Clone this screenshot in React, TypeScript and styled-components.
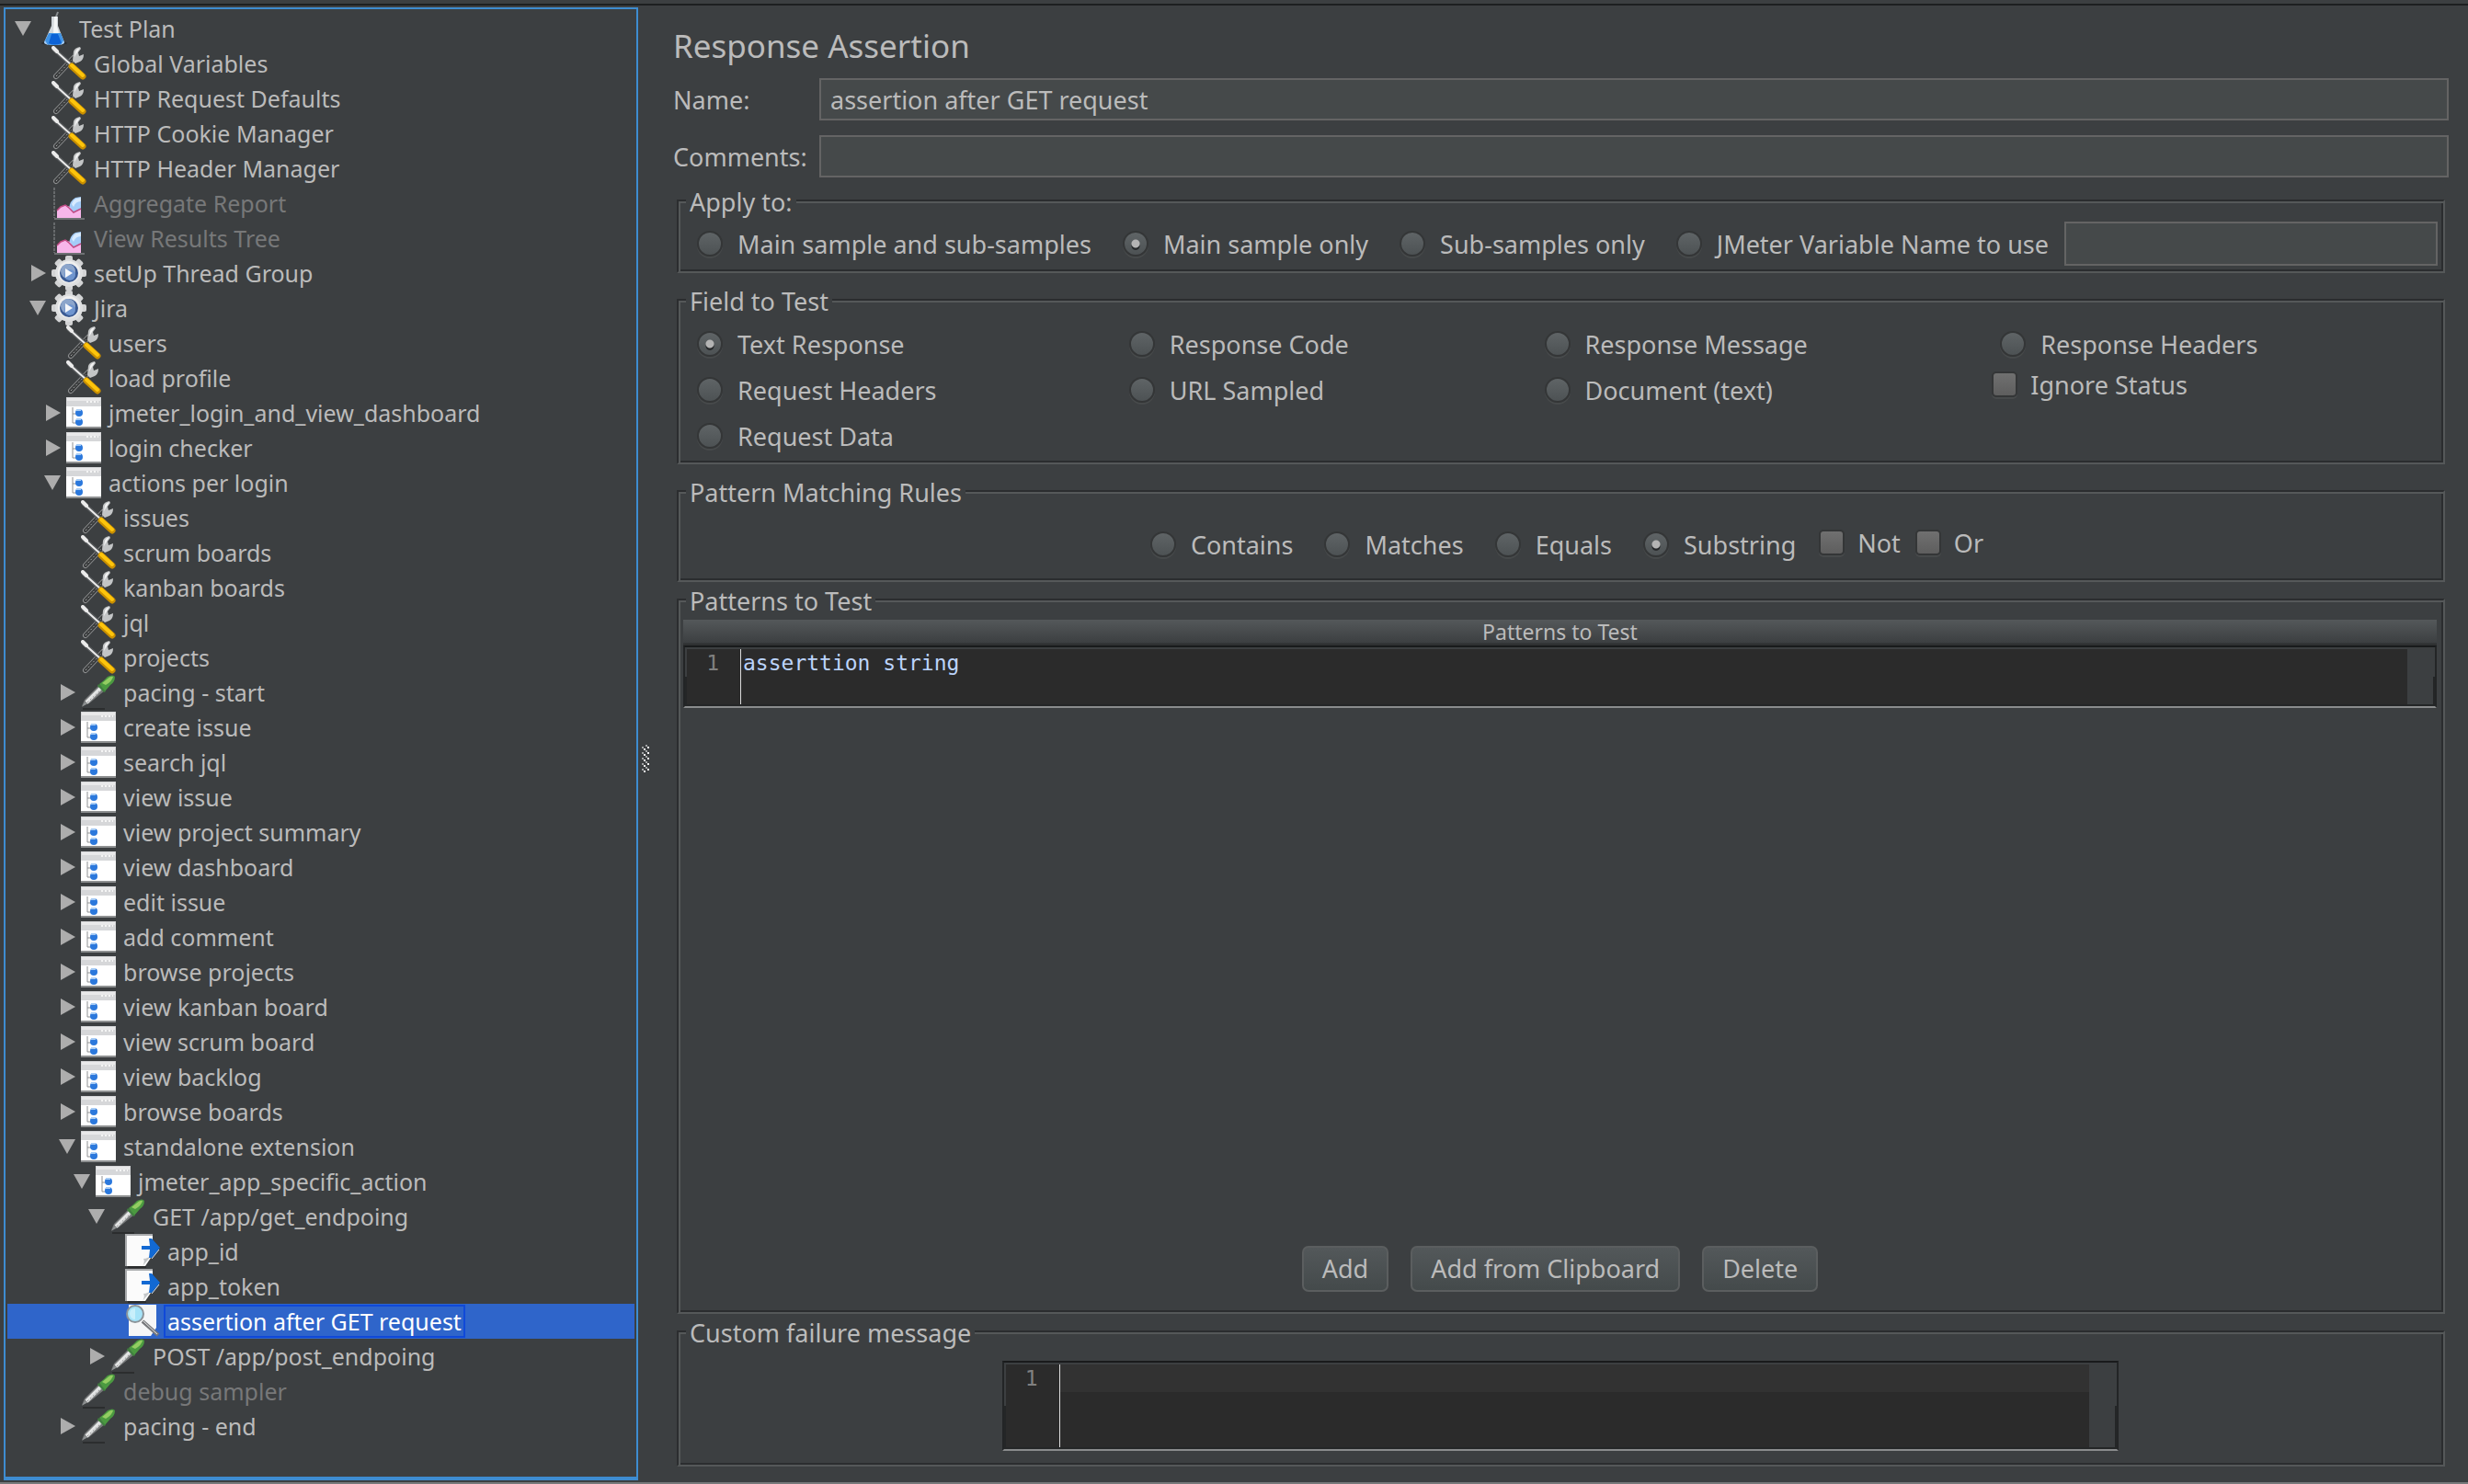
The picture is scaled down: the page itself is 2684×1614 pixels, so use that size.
import React, { useState } from "react";
import styled, { createGlobalStyle, css } from "styled-components";

const color = {
  panel: "#3c3f41",
  text: "#bbbbbb",
  muted: "#777879",
  field: "#45494a",
  fieldBorder: "#646464",
  etchDark: "#2b2d2f",
  etchLight: "#555859",
  focus: "#3e8cd0",
  selection: "#2f65ca",
  editor: "#2b2b2b",
  editorLine: "#323232",
};

const GlobalStyle = createGlobalStyle`
  *, *::before, *::after { box-sizing: border-box; }
  body {
    margin: 0;
    background: ${color.panel};
    color: ${color.text};
    font-family: "Noto Sans", "Open Sans", sans-serif;
    font-size: 27px;
  }
  button, input, textarea { font: inherit; color: inherit; }
`;

const Window = styled.div`
  display: flex;
  flex-direction: column;
  min-height: 100vh;
  border-bottom: 2px solid #77797a;
`;

const TopEdge = styled.div`
  flex: none;
  height: 6px;
  border-bottom: 2px solid #1d1f20;
`;

const Body = styled.div`
  display: flex;
  flex: 1;
`;

/* ---------- Tree ---------- */

const TreePane = styled.nav`
  flex: 0 0 690px;
  margin: 2px 0 2px 4px;
  padding: 2px;
  border: 2px solid ${color.focus};
  border-bottom-width: 4px;
`;

const TreeList = styled.ul`
  list-style: none;
  margin: 0;
  padding: 0;
`;

const TreeRow = styled.li<{ $depth: number; $selected?: boolean }>`
  display: flex;
  align-items: center;
  height: 38px;
  padding-left: ${(p) => 8 + p.$depth * 16}px;
  background: ${(p) => (p.$selected ? color.selection : "transparent")};
`;

const Toggle = styled.button`
  display: flex;
  align-items: center;
  justify-content: center;
  width: 18px;
  height: 38px;
  margin: 0 6px 0 0;
  padding: 0;
  border: 0;
  background: none;
`;

const ToggleGap = styled.span`
  width: 18px;
  margin-right: 6px;
`;

const TreeIcon = styled.svg`
  flex: none;
  width: 38px;
  height: 38px;
  margin-right: 4px;
`;

const TreeLabel = styled.span<{ $selected?: boolean; $muted?: boolean }>`
  padding: 0 2px;
  border: 2px solid ${(p) => (p.$selected ? "#1049d8" : "transparent")};
  font-size: 25px;
  line-height: 32px;
  white-space: nowrap;
  color: ${(p) => (p.$selected ? "#ffffff" : p.$muted ? color.muted : color.text)};
`;

type IconKind = "flask" | "tools" | "chart" | "gear" | "page" | "pipette" | "extract" | "assert";
type Node = { label: string; depth: number; icon: IconKind; open?: boolean; muted?: boolean; selected?: boolean };

const nodes: Node[] = [
  { label: "Test Plan", depth: 0, icon: "flask", open: true },
  { label: "Global Variables", depth: 1, icon: "tools" },
  { label: "HTTP Request Defaults", depth: 1, icon: "tools" },
  { label: "HTTP Cookie Manager", depth: 1, icon: "tools" },
  { label: "HTTP Header Manager", depth: 1, icon: "tools" },
  { label: "Aggregate Report", depth: 1, icon: "chart", muted: true },
  { label: "View Results Tree", depth: 1, icon: "chart", muted: true },
  { label: "setUp Thread Group", depth: 1, icon: "gear", open: false },
  { label: "Jira", depth: 1, icon: "gear", open: true },
  { label: "users", depth: 2, icon: "tools" },
  { label: "load profile", depth: 2, icon: "tools" },
  { label: "jmeter_login_and_view_dashboard", depth: 2, icon: "page", open: false },
  { label: "login checker", depth: 2, icon: "page", open: false },
  { label: "actions per login", depth: 2, icon: "page", open: true },
  { label: "issues", depth: 3, icon: "tools" },
  { label: "scrum boards", depth: 3, icon: "tools" },
  { label: "kanban boards", depth: 3, icon: "tools" },
  { label: "jql", depth: 3, icon: "tools" },
  { label: "projects", depth: 3, icon: "tools" },
  { label: "pacing - start", depth: 3, icon: "pipette", open: false },
  { label: "create issue", depth: 3, icon: "page", open: false },
  { label: "search jql", depth: 3, icon: "page", open: false },
  { label: "view issue", depth: 3, icon: "page", open: false },
  { label: "view project summary", depth: 3, icon: "page", open: false },
  { label: "view dashboard", depth: 3, icon: "page", open: false },
  { label: "edit issue", depth: 3, icon: "page", open: false },
  { label: "add comment", depth: 3, icon: "page", open: false },
  { label: "browse projects", depth: 3, icon: "page", open: false },
  { label: "view kanban board", depth: 3, icon: "page", open: false },
  { label: "view scrum board", depth: 3, icon: "page", open: false },
  { label: "view backlog", depth: 3, icon: "page", open: false },
  { label: "browse boards", depth: 3, icon: "page", open: false },
  { label: "standalone extension", depth: 3, icon: "page", open: true },
  { label: "jmeter_app_specific_action", depth: 4, icon: "page", open: true },
  { label: "GET /app/get_endpoing", depth: 5, icon: "pipette", open: true },
  { label: "app_id", depth: 6, icon: "extract" },
  { label: "app_token", depth: 6, icon: "extract" },
  { label: "assertion after GET request", depth: 6, icon: "assert", selected: true },
  { label: "POST /app/post_endpoing", depth: 5, icon: "pipette", open: false },
  { label: "debug sampler", depth: 3, icon: "pipette", muted: true },
  { label: "pacing - end", depth: 3, icon: "pipette", open: false },
];

const teeth = [0, 45, 90, 135, 180, 225, 270, 315];

const drawings: Record<IconKind, React.ReactNode> = {
  flask: (
    <>
      <ellipse cx="19" cy="35" rx="14" ry="2" fill="#2a2d30" />
      <path d="M21 6 23 1" stroke="#8b8f92" strokeWidth="2" />
      <path d="M16 6h7v10l7 18q-1 3-11 3T8 34l8-18z" fill="#d3d8dc" />
      <path d="M19 6h3v11l2 7h-6z" fill="#f4f6f7" />
      <path d="M13 24h13l4 10q-1 3-11 3T8 34z" fill="#3f93e6" />
      <path d="M16 25h7l4 10q-8 3-14 0z" fill="#0c62d6" />
      <path d="M9 32l-1 3 4 2z M29 32l1 3-4 2z" fill="#a9cdf3" />
    </>
  ),
  tools: (
    <>
      <path d="M5 33 24 13" stroke="#8d8f90" strokeWidth="6" strokeLinecap="round" />
      <path d="M5 33 24 13" stroke="#393b3c" strokeWidth="4" strokeLinecap="round" />
      <path d="M5 33 22 15" stroke="#a5a7a8" strokeWidth="1" strokeDasharray="2 2" />
      <path d="M23 16 24 6q1-4 7-5l1 2-3 4 1 4 5-2q0 6-4 8l-5 2z" fill="#c3c5c6" />
      <path d="M25 12 26 6q1-3 5-4l-3 5z" fill="#f3f3f3" />
      <path d="M2 3 22 21" stroke="#55585a" strokeWidth="5" />
      <path d="M2 3 22 21" stroke="#ebebeb" strokeWidth="2" strokeLinecap="round" />
      <path d="M2 2 6 6" stroke="#ebebeb" strokeWidth="4" strokeLinecap="round" />
      <path d="M22 22 34 33" stroke="#c98f00" strokeWidth="7" strokeLinecap="round" />
      <path d="M22 21 34 32" stroke="#fdc50c" strokeWidth="4" strokeLinecap="round" />
    </>
  ),
  chart: (
    <>
      <path d="M3 2v33" stroke="#66696b" strokeWidth="2" strokeDasharray="3 1" />
      <path d="M3 36h33" stroke="#6e7173" strokeWidth="2" />
      <path d="M19 25q1-9 7-12l6-1v14l-7 4z" fill="#a4ccf8" />
      <path d="M22 20q2-5 5-6l5-1v4q-6 0-8 6z" fill="#d8ebff" />
      <path d="M6 35v-8l4-4 5-2 5 2 4 6 8-4v10z" fill="#f7b6ea" />
      <path d="M6 27l4-4 5-2 4 3 5 5 8-4" fill="none" stroke="#c04b84" strokeWidth="1.5" />
    </>
  ),
  gear: (
    <>
      {teeth.map((angle) => (
        <rect key={angle} x="15" y="0" width="8" height="9" rx="2" fill="#d2d3d4" transform={`rotate(${angle} 19 19)`} />
      ))}
      <circle cx="19" cy="19" r="15" fill="#dedfe0" />
      <circle cx="19" cy="18" r="12" fill="#efefef" />
      <circle cx="19" cy="19" r="10" fill="#3a5a93" />
      <circle cx="18" cy="17" r="8" fill="#8ca5cb" />
      <circle cx="20" cy="21" r="6" fill="#6f95cf" />
      <path d="M15 14v10l8-5z" fill="#f4f6fa" />
    </>
  ),
  page: (
    <>
      <path d="M0 2h38v34H0z" fill="#ffffff" />
      <path d="M0 2h38v10H0z" fill="#d6d7d9" />
      <path d="M1 3h36v3H1z" fill="#e9e9ea" />
      <path d="M22 7h13" stroke="#f5f5f5" strokeWidth="2" strokeDasharray="2 2" />
      <path d="M0 35h38" stroke="#8e9091" strokeWidth="2" />
      <path d="M7 13v17M7 20h5M7 30h5" fill="none" stroke="#8f9193" strokeWidth="1" />
      <circle cx="14" cy="19" r="4" fill="#2b78dc" />
      <circle cx="14" cy="29" r="4" fill="#2b78dc" />
      <path d="M11 16h5M11 26h5" stroke="#a7ccf5" strokeWidth="2" />
    </>
  ),
  pipette: (
    <>
      <path d="M2 37h24" stroke="#2b2d2e" strokeWidth="2" />
      <path d="M1 34 4 27 20 11 26 17 9 31z" fill="#77797a" />
      <path d="M6 30 22 14" stroke="#e4e5e5" strokeWidth="4" />
      <path d="M7 30 23 15" stroke="#8b8d8e" strokeWidth="1" strokeDasharray="2 2" />
      <path d="M1 35 4 30 7 31z" fill="#8f9293" />
      <path d="M20 10l5-4 4-4q6-3 8 0 0 6-5 9l-6 7z" fill="#4b9a40" />
      <path d="M23 9l5-4q4-4 7-3-1 5-8 9z" fill="#93cd62" />
      <path d="M19 10l8 8-2 1-7-7z" fill="#3f823e" />
    </>
  ),
  extract: (
    <>
      <path d="M3 36h20" stroke="#2b2d2e" strokeWidth="2" />
      <path d="M0 1h30v22l-8 12H0z" fill="#fbfbfb" />
      <path d="M1 35V1M0 1h30" stroke="#a9abad" strokeWidth="2" fill="none" />
      <path d="M19 35q3-5 1-8 5 0 10-5z" fill="#c3c6c8" />
      <path d="M18 13h9l-1-8h3l9 10-9 11h-3l1-9h-9z" fill="#1269d3" />
      <path d="M29 27l8-10" stroke="#d7e6f7" strokeWidth="1" />
    </>
  ),
  assert: (
    <>
      <path d="M4 1h30v34H4z" fill="#f5f6f7" />
      <path d="M28 35l6-9v9z" fill="#2f65ca" />
      <circle cx="11" cy="11" r="9" fill="#a5e3f8" stroke="#8b949a" strokeWidth="2" />
      <path d="M5 11q0-6 6-6v12q-5 0-6-6z" fill="#c8effb" />
      <path d="M19 19 36 34" stroke="#77797c" strokeWidth="4" />
      <path d="M20 19 35 33" stroke="#e4e4e4" strokeWidth="1" />
    </>
  ),
};

/* ---------- Splitter ---------- */

const Splitter = styled.div`
  display: flex;
  flex: none;
  align-items: center;
  justify-content: center;
  width: 16px;
  padding-top: 32px;
`;

/* ---------- Form ---------- */

const FormPane = styled.main`
  display: flex;
  flex: 1;
  flex-direction: column;
  min-width: 0;
  padding: 22px 21px 17px 22px;
`;

const Title = styled.h1`
  margin: 0 0 13px;
  font-size: 35px;
  font-weight: 400;
  line-height: 44px;
`;

const Fields = styled.div`
  display: grid;
  grid-template-columns: 159px 1fr;
  align-items: center;
  row-gap: 16px;
  margin-bottom: 9px;
`;

const TextField = styled.input`
  width: 100%;
  min-width: 0;
  height: 46px;
  padding: 0 10px;
  border: 2px solid ${color.fieldBorder};
  border-radius: 0;
  background: ${color.field};
  outline: none;
`;

const VariableField = styled(TextField)`
  flex: 1;
  height: 48px;
`;

const Group = styled.fieldset<{ $grow?: boolean; $last?: boolean }>`
  display: flex;
  flex-direction: column;
  flex: ${(p) => (p.$grow ? "1 0 auto" : "none")};
  min-width: 0;
  margin: 0 4px ${(p) => (p.$last ? 0 : p.$grow ? 3 : 13)}px;
  padding: 0;
  border: 2px solid;
  border-color: ${color.etchDark} ${color.etchLight} ${color.etchLight} ${color.etchDark};
  box-shadow: inset 2px 2px 0 ${color.etchLight}, inset -2px -2px 0 ${color.etchDark};
`;

const RulesGroup = styled(Group)`
  margin-bottom: 3px;
`;

const Legend = styled.legend`
  height: 32px;
  margin-left: 8px;
  padding: 4px 4px 0;
  background: ${color.panel};
  line-height: 28px;
`;

const ApplyRow = styled.div`
  display: flex;
  align-items: center;
  padding: 7px 6px 6px 3px;
`;

const FieldGrid = styled.div`
  display: grid;
  grid-template-columns: 470fr 452fr 496fr 497fr;
  grid-auto-rows: 50px;
  padding: 7px 2px 4px 3px;
`;

const RulesRow = styled.div`
  display: flex;
  align-items: flex-start;
  justify-content: center;
  padding: 21px 2px 18px 6px;
`;

const RadioLabel = styled.label`
  display: flex;
  align-items: center;
  align-self: center;
  gap: 16px;
  height: 42px;
  padding: 0 17px;
  white-space: nowrap;
`;

const CheckLabel = styled.label`
  display: flex;
  align-items: center;
  align-self: start;
  gap: 14px;
  height: 38px;
  padding: 0 8px;
  white-space: nowrap;
`;

const markBase = css`
  appearance: none;
  flex: none;
  width: 28px;
  height: 28px;
  margin: 0;
  border: 2px solid #343637;
  box-shadow: 0 2px 0 #474a4b;
`;

const RadioMark = styled.input`
  ${markBase}
  border-radius: 50%;
  background: linear-gradient(#5f6466, #4d5254);
  &:checked {
    background:
      radial-gradient(circle at 50% 50%, #b4b4b4 4px, transparent 5px),
      radial-gradient(circle at 50% 60%, #26282a 4px, transparent 5px),
      linear-gradient(#5f6466, #4d5254);
  }
`;

const CheckMark = styled.input`
  ${markBase}
  border-radius: 5px;
  background: linear-gradient(#707070, #5e5e5e);
  &:checked {
    background: linear-gradient(#8a8a8a, #757575);
  }
`;

const PatternsBody = styled.div`
  display: flex;
  flex: 1;
  flex-direction: column;
  justify-content: space-between;
  padding: 6px 7px 22px 5px;
`;

const PatternTable = styled.table`
  width: 100%;
  border-spacing: 0;
`;

const HeadCell = styled.th`
  height: 28px;
  padding: 0 0 2px;
  background: linear-gradient(#54585a, #3c3f41 90%, #2f3132 92%);
  font-size: 23px;
  font-weight: 400;
  line-height: 26px;
`;

const BodyCell = styled.td`
  padding: 0;
`;

const Editor = styled.div<{ $tall?: boolean }>`
  display: flex;
  width: ${(p) => (p.$tall ? "1214px" : "100%")};
  max-width: 100%;
  height: ${(p) => (p.$tall ? 98 : 68)}px;
  margin: 0 auto;
  padding: 2px;
  border: 2px solid #232526;
  border-top-color: #191b1c;
  border-bottom-color: #8a8c8d;
  background: linear-gradient(${color.panel}, ${color.panel} 50%, #242627 50%);
`;

const Gutter = styled.div`
  flex: none;
  width: 59px;
  padding-right: 23px;
  border-right: 1px solid #dcdcdc;
  background: ${color.editor};
  color: #808080;
  font-family: "DejaVu Sans Mono", monospace;
  font-size: 23px;
  line-height: 30px;
  text-align: right;
`;

const Code = styled.textarea<{ $activeLine?: boolean }>`
  flex: 1;
  min-width: 0;
  padding: 0 2px;
  border: 0;
  outline: none;
  resize: none;
  overflow: hidden;
  background: ${(p) =>
    p.$activeLine
      ? `linear-gradient(${color.editorLine} 30px, ${color.editor} 30px)`
      : color.editor};
  color: #bcd4fc;
  font-family: "DejaVu Sans Mono", monospace;
  font-size: 23px;
  line-height: 30px;
`;

const ScrollTrack = styled.div`
  flex: none;
  width: 28px;
  background: ${color.panel};
`;

const Actions = styled.div`
  display: flex;
  justify-content: center;
  gap: 24px;
`;

const ActionButton = styled.button`
  height: 50px;
  padding: 0 20px;
  border: 2px solid #5b5e5f;
  border-radius: 7px;
  background: linear-gradient(#53585a, #444a4b);
  line-height: 44px;
`;

const MessageBody = styled.div`
  padding: 16px 7px 15px 5px;
`;

type OptionProps = { name: string; label: string; value: string; onPick: (label: string) => void };

function Radio({ name, label, value, onPick }: OptionProps) {
  return (
    <RadioLabel>
      <RadioMark type="radio" name={name} checked={value === label} onChange={() => onPick(label)} />
      {label}
    </RadioLabel>
  );
}

function Check({ label }: { label: string }) {
  return (
    <CheckLabel>
      <CheckMark type="checkbox" />
      {label}
    </CheckLabel>
  );
}

function CodeEditor({ label, text, tall }: { label: string; text: string; tall?: boolean }) {
  return (
    <Editor $tall={tall}>
      <Gutter>1</Gutter>
      <Code aria-label={label} defaultValue={text} $activeLine={tall} spellCheck={false} />
      <ScrollTrack />
    </Editor>
  );
}

function Tree() {
  return (
    <TreePane aria-label="Test plan">
      <TreeList>
        {nodes.map((node) => (
          <TreeRow key={node.label} $depth={node.depth} $selected={node.selected}>
            {node.open === undefined ? (
              <ToggleGap />
            ) : (
              <Toggle aria-expanded={node.open} aria-label={node.label}>
                <svg width="18" height="18" viewBox="0 0 18 18">
                  <path d={node.open ? "M0 1h18L9 17z" : "M2 0v18l16-9z"} fill="#adadad" />
                </svg>
              </Toggle>
            )}
            <TreeIcon viewBox="0 0 38 38">{drawings[node.icon]}</TreeIcon>
            <TreeLabel $selected={node.selected} $muted={node.muted}>
              {node.label}
            </TreeLabel>
          </TreeRow>
        ))}
      </TreeList>
    </TreePane>
  );
}

const applyOptions = ["Main sample and sub-samples", "Main sample only", "Sub-samples only", "JMeter Variable Name to use"];
const ruleOptions = ["Contains", "Matches", "Equals", "Substring"];

export default function App() {
  const [applyTo, setApplyTo] = useState("Main sample only");
  const [field, setField] = useState("Text Response");
  const [rule, setRule] = useState("Substring");
  const fieldRadio = (label: string) => <Radio name="field" label={label} value={field} onPick={setField} />;

  return (
    <>
      <GlobalStyle />
      <Window>
        <TopEdge />
        <Body>
          <Tree />
          <Splitter>
            <svg width="8" height="30" viewBox="0 0 8 30" shapeRendering="crispEdges">
              {[0, 6, 12, 18, 24].map((y) => (
                <g key={y}>
                  <path d={`M4 ${y}h2v2h-2zM0 ${y + 2}h2v2h-2z`} fill="#a2a4a5" />
                  <path d={`M6 ${y + 2}h2v2h-2zM2 ${y + 4}h2v2h-2z`} fill="#f2f2f2" />
                </g>
              ))}
            </svg>
          </Splitter>
          <FormPane>
            <Title>Response Assertion</Title>
            <Fields>
              <label htmlFor="name">Name:</label>
              <TextField id="name" defaultValue="assertion after GET request" />
              <label htmlFor="comments">Comments:</label>
              <TextField id="comments" />
            </Fields>

            <Group>
              <Legend>Apply to:</Legend>
              <ApplyRow>
                {applyOptions.map((label) => (
                  <Radio key={label} name="apply" label={label} value={applyTo} onPick={setApplyTo} />
                ))}
                <VariableField aria-label="JMeter Variable Name" />
              </ApplyRow>
            </Group>

            <Group>
              <Legend>Field to Test</Legend>
              <FieldGrid>
                {fieldRadio("Text Response")}
                {fieldRadio("Response Code")}
                {fieldRadio("Response Message")}
                {fieldRadio("Response Headers")}
                {fieldRadio("Request Headers")}
                {fieldRadio("URL Sampled")}
                {fieldRadio("Document (text)")}
                <Check label="Ignore Status" />
                {fieldRadio("Request Data")}
              </FieldGrid>
            </Group>

            <RulesGroup>
              <Legend>Pattern Matching Rules</Legend>
              <RulesRow>
                {ruleOptions.map((label) => (
                  <Radio key={label} name="rule" label={label} value={rule} onPick={setRule} />
                ))}
                <Check label="Not" />
                <Check label="Or" />
              </RulesRow>
            </RulesGroup>

            <Group $grow>
              <Legend>Patterns to Test</Legend>
              <PatternsBody>
                <PatternTable>
                  <thead>
                    <tr>
                      <HeadCell scope="col">Patterns to Test</HeadCell>
                    </tr>
                  </thead>
                  <tbody>
                    <tr>
                      <BodyCell>
                        <CodeEditor label="Pattern" text="asserttion string" />
                      </BodyCell>
                    </tr>
                  </tbody>
                </PatternTable>
                <Actions>
                  <ActionButton>Add</ActionButton>
                  <ActionButton>Add from Clipboard</ActionButton>
                  <ActionButton>Delete</ActionButton>
                </Actions>
              </PatternsBody>
            </Group>

            <Group $last>
              <Legend>Custom failure message</Legend>
              <MessageBody>
                <CodeEditor label="Custom failure message" text="" tall />
              </MessageBody>
            </Group>
          </FormPane>
        </Body>
      </Window>
    </>
  );
}
